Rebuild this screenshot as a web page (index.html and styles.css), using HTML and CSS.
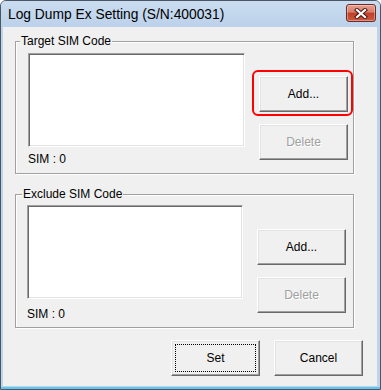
FILE: index.html
```html
<!DOCTYPE html>
<html lang="en">
<head>
  <meta charset="UTF-8">
  <meta name="viewport" content="width=device-width, initial-scale=1.0">
  <title>Log Dump Ex Setting</title>
  <link rel="stylesheet" href="styles.css">
</head>
<body>
  <div class="window">
    <div class="titlebar">
      <span class="title">Log Dump Ex Setting (S/N:400031)</span>
      <button class="close-btn" aria-label="Close">
        <svg width="14" height="11" viewBox="0 0 14 11">
          <path d="M3 2 L11 9 M11 2 L3 9" stroke="#4a1a14" stroke-width="4.2" stroke-linecap="square" fill="none"/>
          <path d="M3 2 L11 9 M11 2 L3 9" stroke="#ffffff" stroke-width="2.2" stroke-linecap="square" fill="none"/>
        </svg>
      </button>
    </div>

    <div class="client">
      <fieldset class="group group-target">
        <legend>Target SIM Code</legend>
        <div class="group-body">
          <div class="list-col">
            <div class="listbox"></div>
            <div class="count">SIM : 0</div>
          </div>
          <div class="button-col">
            <div class="highlight"><button class="btn">Add...</button></div>
            <button class="btn" disabled>Delete</button>
          </div>
        </div>
      </fieldset>

      <fieldset class="group group-exclude">
        <legend>Exclude SIM Code</legend>
        <div class="group-body">
          <div class="list-col">
            <div class="listbox"></div>
            <div class="count">SIM : 0</div>
          </div>
          <div class="button-col">
            <button class="btn">Add...</button>
            <button class="btn" disabled>Delete</button>
          </div>
        </div>
      </fieldset>

      <div class="footer">
        <button class="btn btn-default">Set</button>
        <button class="btn">Cancel</button>
      </div>
    </div>
  </div>
</body>
</html>
```

FILE: styles.css
```css
* {
  box-sizing: border-box;
}

body {
  margin: 0;
  font-family: 'Liberation Sans', Arial, sans-serif;
  font-size: 12px;
  color: #000;
}

.window {
  width: 381px;
  height: 390px;
  border: 1px solid #4a5666;
  border-radius: 6px 6px 0 0;
  background: linear-gradient(#5ec8ea, #5ec8ea) bottom / 100% 2px no-repeat, #bed4eb;
  display: flex;
  flex-direction: column;
}

.titlebar {
  height: 26px;
  flex-shrink: 0;
  display: flex;
  align-items: flex-start;
  padding: 0 4px 0 7px;
  border-radius: 5px 5px 0 0;
  background: linear-gradient(#cadcf0, #bcd2ea);
}

.title {
  flex: 1;
  font-size: 13.8px;
  line-height: 27px;
}

.close-btn {
  margin-top: 3px;
  width: 30px;
  height: 18px;
  padding: 0;
  border: 1px solid #6e2a24;
  border-radius: 3px;
  background: linear-gradient(#e6a08e, #d67f68 45%, #c03f26 50%, #cc5a3e);
  box-shadow: inset 0 0 0 1px rgba(255, 255, 255, 0.35);
  display: flex;
  align-items: center;
  justify-content: center;
}

.client {
  flex: 1;
  margin: 0 3px 3px 2px;
  padding: 7px 0 0 12px;
  background: #f0f0f0;
}

.group {
  width: 339px;
  margin: 0;
  padding: 0;
  border: 1px solid #a0a0a0;
  box-shadow: inset 1px 1px #fff, 1px 1px #fff;
}

.group legend {
  margin-left: 4px;
  padding: 0 1px;
  line-height: 14px;
  background: #f0f0f0;
}

.group-body {
  display: flex;
  gap: 14px;
  padding: 5px 5px 7px 12px;
}

.list-col {
  display: flex;
  flex-direction: column;
}

.listbox {
  width: 217px;
  height: 94px;
  background: #fff;
  border: 1px solid;
  border-color: #a0a0a0 #fff #fff #a0a0a0;
  box-shadow: inset 1px 1px #696969, inset -1px -1px #e3e3e3;
}

.count {
  margin-top: 5px;
  line-height: 14px;
}

.button-col {
  display: flex;
  flex-direction: column;
  gap: 12px;
  padding-top: 23px;
}

.group-exclude {
  margin-top: 13px;
}

.group-exclude legend {
  margin-left: 6px;
}

.group-exclude .group-body {
  padding: 4px 7px 6px 11px;
}

.group-exclude .listbox {
  width: 216px;
}

.group-exclude .count {
  margin-top: 8px;
}

.group-exclude .button-col {
  padding-top: 24px;
}

.btn {
  position: relative;
  width: 89px;
  height: 36px;
  padding: 0;
  font-family: 'Liberation Sans', Arial, sans-serif;
  font-size: 12px;
  color: #000;
  background: #f0f0f0;
  border: 1px solid;
  border-color: #fff #696969 #696969 #fff;
  box-shadow: inset -1px -1px #a0a0a0, inset 1px 1px #e3e3e3;
}

.btn:disabled {
  color: #a0a0a0;
  text-shadow: 1px 1px #fff;
}

.btn-default::after {
  content: '';
  position: absolute;
  inset: 3px;
  border: 1px dotted #000;
}

.highlight {
  position: relative;
  display: flex;
}

.highlight::after {
  content: '';
  position: absolute;
  top: -6px;
  right: -5px;
  bottom: -4px;
  left: -7px;
  border: 2px solid #ff0000;
  border-radius: 6px;
  pointer-events: none;
}

.footer {
  display: flex;
  justify-content: flex-end;
  gap: 14px;
  margin-top: 12px;
  padding-right: 14px;
}
```
